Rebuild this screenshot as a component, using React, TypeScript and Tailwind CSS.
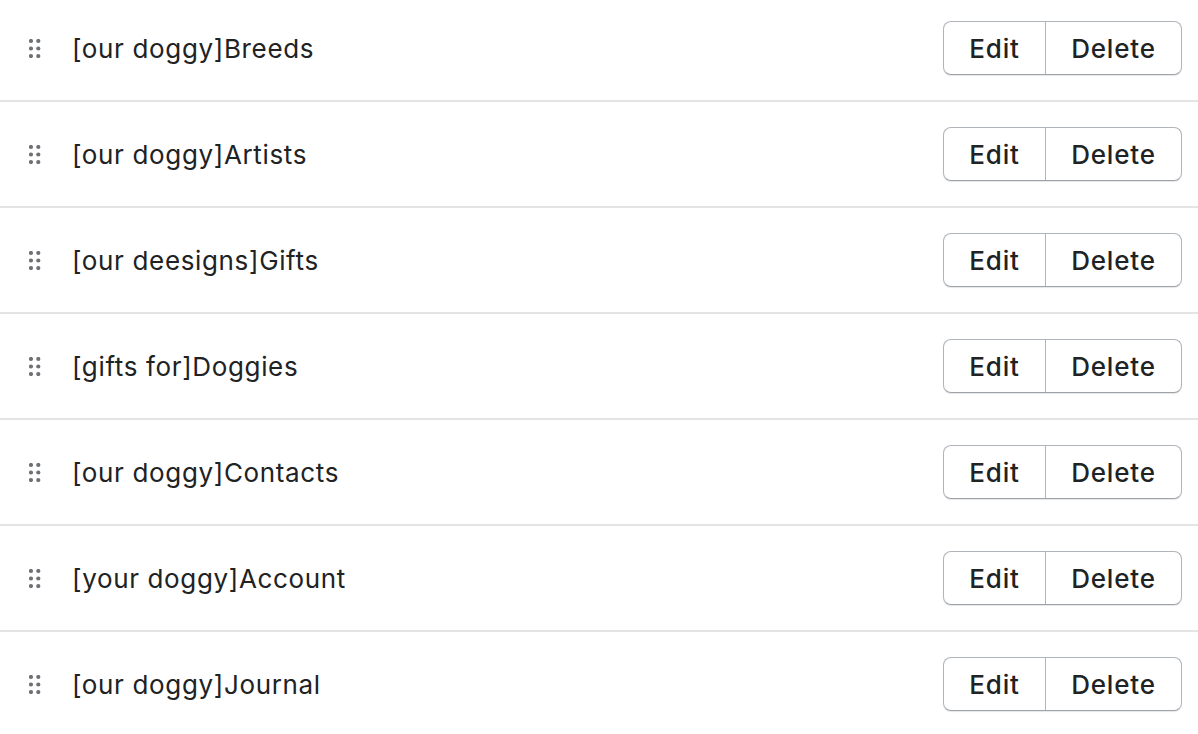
const items = [
  '[our doggy]Breeds',
  '[our doggy]Artists',
  '[our deesigns]Gifts',
  '[gifts for]Doggies',
  '[our doggy]Contacts',
  '[your doggy]Account',
  '[our doggy]Journal',
]

function DragHandle() {
  return (
    <svg width="12" height="19" viewBox="0 0 12 19" aria-hidden="true" className="shrink-0">
      {[2, 9.3].map((cx) =>
        [2, 9.5, 17].map((cy) => <circle key={`${cx}-${cy}`} cx={cx} cy={cy} r="2.1" fill="#6d7175" />),
      )}
    </svg>
  )
}

function Row({ title }: { title: string }) {
  return (
    <div className="flex items-center border-b-2 border-[#e3e4e6] py-[25px] pl-[29px] pr-[16px]">
      <DragHandle />
      <span className="ml-[31px] mt-[2px] flex-1 text-[26px] leading-none tracking-[0.65px] text-[#202223]">{title}</span>
      {/* segmented button pair */}
      <div className="flex h-[54px] overflow-hidden rounded-[8px] border-[1.5px] border-[#b0b5bb] border-b-[#9ea3a9] bg-white shadow-[0_1px_1px_rgba(0,0,0,0.1)]">
        <button className="w-[101px] text-[26px] font-medium tracking-[0.8px] text-[#202223]">Edit</button>
        <button className="w-[136px] border-l-[1.5px] border-[#b0b5bb] text-[26px] font-medium tracking-[0.8px] text-[#202223]">
          Delete
        </button>
      </div>
    </div>
  )
}

export default function App() {
  return (
    <div className="h-[734px] w-full overflow-hidden bg-white font-['Inter',sans-serif] antialiased">
      <div className="-mt-[4px]">
        {items.map((t) => (
          <Row key={t} title={t} />
        ))}
      </div>
    </div>
  )
}
